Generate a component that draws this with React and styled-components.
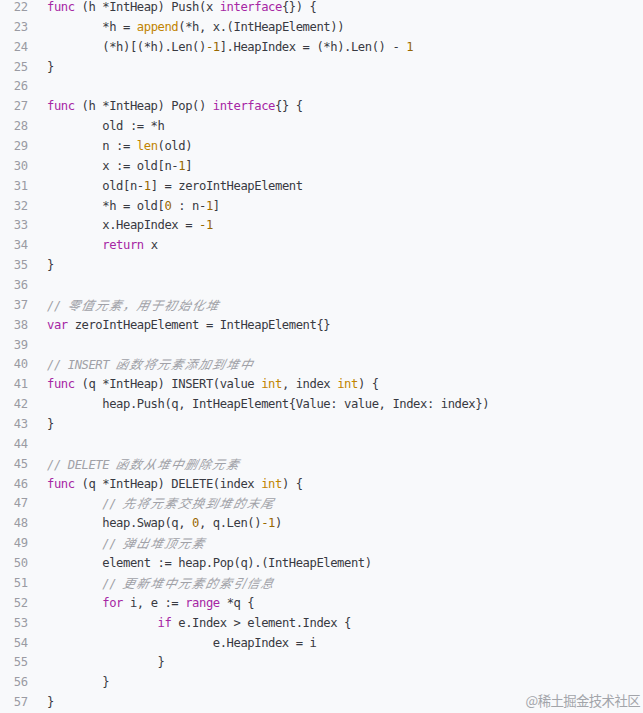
import React from 'react'
import styled, { createGlobalStyle } from 'styled-components'

const GlobalStyle = createGlobalStyle`
  html, body {
    margin: 0;
    padding: 0;
    background: #f8f9fb;
  }
  body {
    overflow: hidden;
  }
`

const source = [
    'func (h *IntHeap) Push(x interface{}) {',
    '\t*h = append(*h, x.(IntHeapElement))',
    '\t(*h)[(*h).Len()-1].HeapIndex = (*h).Len() - 1',
    '}',
    '',
    'func (h *IntHeap) Pop() interface{} {',
    '\told := *h',
    '\tn := len(old)',
    '\tx := old[n-1]',
    '\told[n-1] = zeroIntHeapElement',
    '\t*h = old[0 : n-1]',
    '\tx.HeapIndex = -1',
    '\treturn x',
    '}',
    '',
    '// 零值元素，用于初始化堆',
    'var zeroIntHeapElement = IntHeapElement{}',
    '',
    '// INSERT 函数将元素添加到堆中',
    'func (q *IntHeap) INSERT(value int, index int) {',
    '\theap.Push(q, IntHeapElement{Value: value, Index: index})',
    '}',
    '',
    '// DELETE 函数从堆中删除元素',
    'func (q *IntHeap) DELETE(index int) {',
    '\t// 先将元素交换到堆的末尾',
    '\theap.Swap(q, 0, q.Len()-1)',
    '\t// 弹出堆顶元素',
    '\telement := heap.Pop(q).(IntHeapElement)',
    '\t// 更新堆中元素的索引信息',
    '\tfor i, e := range *q {',
    '\t\tif e.Index > element.Index {',
    '\t\t\te.HeapIndex = i',
    '\t\t}',
    '\t}',
    '}',
]

const FIRST_LINE = 22

const tokenRe = /\b(func|var|return|for|range|if|interface)\b|\b(append|len|int)\b|((?<=[)= ])-\d+|\b\d+\b)/g

// split a line into [kind, text] pieces, roughly like highlight.js does for go
function tokenize(line) {
    const expanded = line.replace(/\t/g, '        ')
    const out = []
    let body = expanded
    let comment = null
    const ci = expanded.indexOf('//')
    if (ci >= 0) {
        body = expanded.slice(0, ci)
        comment = expanded.slice(ci)
    }
    let last = 0
    let m
    tokenRe.lastIndex = 0
    while ((m = tokenRe.exec(body))) {
        if (m.index > last) out.push(['plain', body.slice(last, m.index)])
        const kind = m[1] ? 'keyword' : m[2] ? 'builtin' : 'number'
        out.push([kind, m[0]])
        last = m.index + m[0].length
    }
    if (last < body.length) out.push(['plain', body.slice(last)])
    if (comment) out.push(['comment', comment])
    return out
}

function renderComment(text, key) {
    const parts = text.split(/([\u3000-\u9fff\uff00-\uffef]+)/)
    return (
        <Token key={key} $kind="comment">
            {parts.map((p, i) =>
                /[\u3000-\u9fff\uff00-\uffef]/.test(p)
                    ? <Han key={i}>{p}</Han>
                    : p
            )}
        </Token>
    )
}

const App = () => {
    return (
        <>
            <GlobalStyle />
            <CodeBlock>
                {source.map((line, i) => (
                    <Row key={i}>
                        <LineNo>{FIRST_LINE + i}</LineNo>
                        <Code>
                            {tokenize(line).map(([kind, text], j) =>
                                kind === 'comment'
                                    ? renderComment(text, j)
                                    : <Token key={j} $kind={kind}>{text}</Token>
                            )}
                        </Code>
                    </Row>
                ))}
                <Stamp>@稀土掘金技术社区</Stamp>
            </CodeBlock>
        </>
    )
}

export default App

const colors = {
    plain: '#383a42',
    keyword: '#a626a4',
    builtin: '#c18401',
    number: '#986801',
    comment: '#a0a1a7',
}

const CodeBlock = styled.div({
    position: 'relative',
    marginTop: '-2px',
    height: '715px',
    background: '#f8f9fb',
    fontFamily: '"DejaVu Sans Mono", "Liberation Mono", "Noto Sans CJK SC", monospace',
    fontSize: '12.2px',
    letterSpacing: '-0.43px',
})

const Row = styled.div({
    display: 'grid',
    gridTemplateColumns: '28px 1fr',
    columnGap: '19px',
    height: '19.86px',
    lineHeight: '19.86px',
    whiteSpace: 'pre',
})

const LineNo = styled.span({
    textAlign: 'right',
    color: '#9a9ba3',
    letterSpacing: '-0.2px',
})

const Code = styled.code({
    fontFamily: 'inherit',
    color: colors.plain,
})

const Token = styled.span(({ $kind }) => ({
    color: colors[$kind],
    fontStyle: $kind === 'comment' ? 'italic' : 'normal',
}))

// the CJK face has no italic, so lean it by hand
const Han = styled.span({
    display: 'inline-block',
    transform: 'skewX(-13deg)',
    fontFamily: '"Noto Sans CJK SC", sans-serif',
    fontSize: '12.4px',
    letterSpacing: '1.4px',
})

const Stamp = styled.div({
    position: 'absolute',
    right: '3px',
    bottom: '3px',
    fontFamily: '"Noto Sans CJK SC", sans-serif',
    fontSize: '13.4px',
    letterSpacing: '-0.6px',
    color: '#a3a5aa',
})
